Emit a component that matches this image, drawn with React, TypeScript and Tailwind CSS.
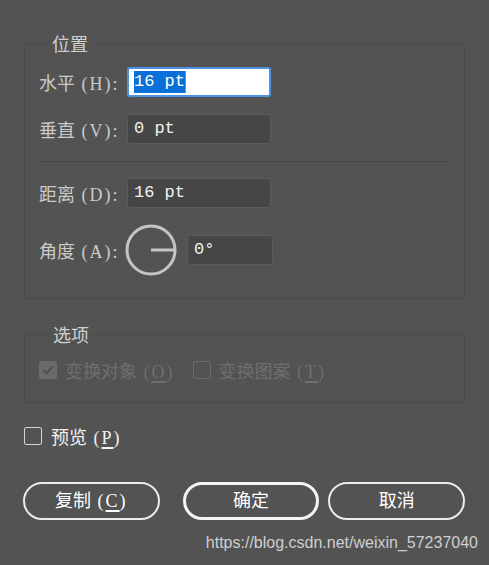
import React from "react";

const cjk = "font-['Liberation_Serif','Noto_Sans_CJK_SC',serif]";
const mono = "font-['Liberation_Mono','Noto_Sans_CJK_SC',monospace]";

function Field({ value, width = "w-[144px]" }: { value: string; width?: string }) {
  return (
    <div
      className={`${width} ${mono} flex h-[30px] items-center rounded-[3px] border border-[#5b5b5b] bg-[#464646] pl-[6px] text-[17px] text-[#f2f2f2]`}
    >
      {value}
    </div>
  );
}

// latin part of a label, e.g. " (H):" – wider spacing like the half-width song font
function Lat({ children }: { children: React.ReactNode }) {
  return <span className="tracking-[2px]">{children}</span>;
}

function Row({ label, keyText, children }: { label: string; keyText: string; children: React.ReactNode }) {
  return (
    <div className="flex items-center">
      <span className={`${cjk} w-[89px] translate-y-[2px] pl-[1px] text-[18px] leading-[22px] text-[#cacaca]`}>
        {label}
        <Lat> ({keyText}):</Lat>
      </span>
      {children}
    </div>
  );
}

function Dial() {
  return (
    <svg width="52" height="52" viewBox="0 0 52 52" className="-ml-[2px]">
      <circle cx="26" cy="26" r="24" fill="none" stroke="#c4c4c4" strokeWidth="3" />
      <line x1="26" y1="26" x2="49" y2="26" stroke="#c4c4c4" strokeWidth="3" />
    </svg>
  );
}

function Key({ k }: { k: string }) {
  return <span className="underline decoration-[2px] underline-offset-[3px]">{k}</span>;
}

export default function App() {
  return (
    <div className={`${cjk} h-[565px] w-[489px] bg-[#535353] px-[24px] pt-[31px]`}>
      <fieldset className="rounded-[3px] border border-[#4a4a4a] px-[13px] pb-[22px] pt-[12px]">
        <legend className="ml-[11px] px-[3px] text-[18px] leading-[24px] text-[#d0d0d0]">
          <span className="inline-block translate-y-[2px]">位置</span>
        </legend>
        <div className="flex flex-col">
          <Row label="水平" keyText="H">
            <div
              className={`${mono} flex h-[30px] w-[144px] items-center rounded-[3px] border-2 border-[#4d93e3] bg-white pl-[5px] text-[17px]`}
            >
              <span className="border-r border-[#e07b2c] bg-[#0a6fd6] leading-[22px] text-white">16 pt</span>
            </div>
          </Row>
          <div className="mt-[17px]">
            <Row label="垂直" keyText="V">
              <Field value="0 pt" />
            </Row>
          </div>
          <div className="mt-[17px] border-t border-[#484848]" />
          <div className="mt-[16px]">
            <Row label="距离" keyText="D">
              <Field value="16 pt" />
            </Row>
          </div>
          <div className="mt-[16px]">
            <Row label="角度" keyText="A">
              <Dial />
              <div className="ml-[10px]">
                <Field value="0°" width="w-[86px]" />
              </div>
            </Row>
          </div>
        </div>
      </fieldset>

      <fieldset className="mt-[23px] rounded-[3px] border border-[#4a4a4a] px-[14px] pb-[21px] pt-[13px]">
        <legend className="ml-[11px] px-[3px] text-[18px] leading-[24px] text-[#d0d0d0]">
          <span className="inline-block translate-y-[2px]">选项</span>
        </legend>
        <div className="flex items-center text-[18px] leading-[22px] text-[#6e6e6e]">
          <span className="flex h-[18px] w-[18px] items-center justify-center rounded-[2px] bg-[#6b6b6b]">
            <svg width="14" height="14" viewBox="0 0 14 14">
              <path d="M2.5 7.2 L5.6 10.2 L11.5 3.6" fill="none" stroke="#535353" strokeWidth="2.6" />
            </svg>
          </span>
          <span className="ml-[8px] translate-y-[2px]">
            变换对象<Lat> (<Key k="O" />)</Lat>
          </span>
          <span className="ml-[18px] h-[18px] w-[18px] rounded-[2px] border-[1.5px] border-[#6b6b6b]" />
          <span className="ml-[8px] translate-y-[2px]">
            变换图案<Lat> (<Key k="T" />)</Lat>
          </span>
        </div>
      </fieldset>

      <div className="mt-[22px] flex items-center text-[18px] leading-[22px] text-[#f0f0f0]">
        <span className="h-[18px] w-[18px] rounded-[2px] border-[1.5px] border-[#d4d4d4]" />
        <span className="ml-[9px] translate-y-[2px]">
          预览<Lat> (<Key k="P" />)</Lat>
        </span>
      </div>

      <div className="mt-[35px] flex items-center text-[18px] text-white">
        <button className="-ml-[1px] flex h-[38px] w-[137px] items-center justify-center rounded-full border-2 border-[#ececec]">
          <span>
            复制<Lat> (<Key k="C" />)</Lat>
          </span>
        </button>
        <button className="ml-[23px] flex h-[38px] w-[137px] items-center justify-center rounded-full border-[3px] border-[#f4f4f4]">
          确定
        </button>
        <button className="ml-[9px] flex h-[38px] w-[137px] items-center justify-center rounded-full border-2 border-[#ececec]">
          取消
        </button>
      </div>

      <div className="mt-[13px] -mr-[13px] text-right font-['Liberation_Sans',sans-serif] text-[16px] leading-[20px] text-[#cfcfcf]">
        https://blog.csdn.net/weixin_57237040
      </div>
    </div>
  );
}
